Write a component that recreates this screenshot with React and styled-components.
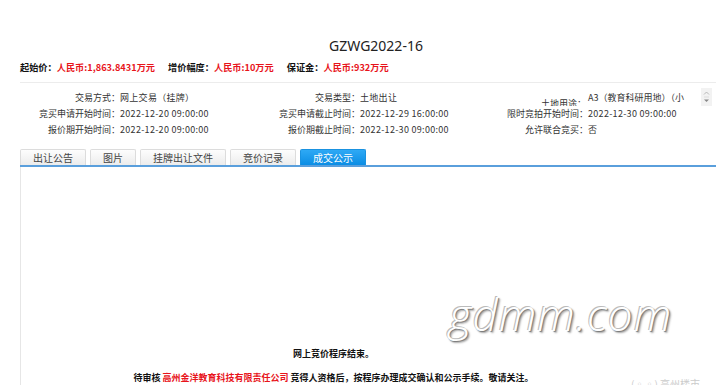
import React from "react";
import styled, { createGlobalStyle } from "styled-components";

const GlobalStyle = createGlobalStyle`
  html, body {
    margin: 0;
    padding: 0;
    background: #fff;
    overflow: hidden;
  }
  body {
    font-family: "Noto Sans CJK SC", "Noto Sans", sans-serif;
    color: #333;
  }
`;

const cjk = `"Noto Sans CJK SC", "Noto Sans", sans-serif`;

const info = [
  [
    ["交易方式：", "网上交易（挂牌）"],
    ["交易类型：", "土地出让"],
    ["土地用途：", "A3（教育科研用地）（小", true],
  ],
  [
    ["竞买申请开始时间：", "2022-12-20 09:00:00"],
    ["竞买申请截止时间：", "2022-12-29 16:00:00"],
    ["限时竞拍开始时间：", "2022-12-30 09:00:00"],
  ],
  [
    ["报价期开始时间：", "2022-12-20 09:00:00"],
    ["报价期截止时间：", "2022-12-30 09:00:00"],
    ["允许联合竞买：", "否"],
  ],
];

const tabs = ["出让公告", "图片", "挂牌出让文件", "竞价记录", "成交公示"];

const App = () => {
  return (
    <Page>
      <GlobalStyle />
      <Title>GZWG2022-16</Title>
      <PriceLine>
        <Price>
          起始价：<Red>人民币:1,863.8431万元</Red>
        </Price>
        <Price>
          增价幅度：<Red>人民币:10万元</Red>
        </Price>
        <Price>
          保证金：<Red>人民币:932万元</Red>
        </Price>
      </PriceLine>
      <Divider />
      <InfoGrid>
        {info.map((row) =>
          row.map(([label, value, scroll]) => (
            <React.Fragment key={label}>
              {scroll ? (
                <ClippedLabel>
                  <span>{label}</span>
                </ClippedLabel>
              ) : (
                <Label>{label}</Label>
              )}
              {scroll ? (
                <ScrollValue>
                  <span>{value}</span>
                  <Spinner>
                    <svg width="7" height="14" viewBox="0 0 7 14">
                      <path d="M1 4.5 L3.5 2 L6 4.5" fill="none" stroke="#aaa" strokeWidth="0.8" />
                      <line x1="1" y1="7" x2="6" y2="7" stroke="#ccc" strokeWidth="0.6" />
                      <path d="M1 9.5 L3.5 12 L6 9.5" fill="#888" />
                    </svg>
                  </Spinner>
                </ScrollValue>
              ) : (
                <Value>{value}</Value>
              )}
            </React.Fragment>
          ))
        )}
      </InfoGrid>
      <TabBar>
        {tabs.map((t, i) => (
          <Tab key={t} $active={i === tabs.length - 1}>
            {t}
          </Tab>
        ))}
      </TabBar>
      <Content>
        <Watermark>gdmm.com</Watermark>
        <Ended>网上竞价程序结束。</Ended>
        <Notice>
          待审核 <Red>高州金洋教育科技有限责任公司</Red> 竞得人资格后，按程序办理成交确认和公示手续。敬请关注。
        </Notice>
        <Stamp>(◦◦) 高州楼市</Stamp>
      </Content>
    </Page>
  );
};

export default App;

const Page = styled.div`
  width: 716px;
  height: 385px;
  padding-left: 20px;
  box-sizing: border-box;
  display: flex;
  flex-direction: column;
`;

const Title = styled.h1`
  margin: 0;
  padding: 37px 0 0 16px;
  text-align: center;
  font-family: "Noto Sans", "Open Sans", sans-serif;
  font-weight: 400;
  font-size: 14px;
  line-height: 18px;
  color: #222;
`;

const PriceLine = styled.div`
  display: flex;
  gap: 13px;
  margin-top: 5px;
  font-family: ${cjk};
  font-size: 9.2px;
  line-height: 14px;
  font-weight: 700;
  color: #111;
`;

const Price = styled.span`
  white-space: nowrap;
`;

const Red = styled.span`
  color: #e8141b;
`;

const Divider = styled.div`
  margin-top: 8px;
  height: 1px;
  background: #ececec;
`;

const InfoGrid = styled.div`
  display: grid;
  grid-template-columns: 100px 140px 100px 128px 100px 1fr;
  grid-auto-rows: 16px;
  margin-top: 7px;
  font-family: ${cjk};
  font-size: 9px;
  color: #333;
`;

const Label = styled.div`
  text-align: right;
  white-space: nowrap;
  line-height: 16px;
`;

const ClippedLabel = styled.div`
  height: 16px;
  overflow: hidden;
  text-align: right;
  white-space: nowrap;
  line-height: 16px;
  padding-top: 6px;
  box-sizing: border-box;
  padding-right: 2px;
`;

const Value = styled.div`
  white-space: nowrap;
  line-height: 16px;
  letter-spacing: 0.3px;
`;

const ScrollValue = styled.div`
  display: flex;
  justify-content: space-between;
  align-items: flex-start;
  white-space: nowrap;
  line-height: 16px;
  padding-right: 4px;
`;

const Spinner = styled.div`
  width: 11px;
  height: 18px;
  margin-top: -2px;
  background: #f2f2f2;
  display: flex;
  align-items: center;
  justify-content: center;
`;

const TabBar = styled.div`
  display: flex;
  gap: 4px;
  margin-top: 11px;
  border-bottom: 2px solid #5a9fdc;
  font-family: ${cjk};
  font-size: 10px;
`;

const Tab = styled.div`
  height: 15px;
  line-height: 15px;
  padding: 0 12px;
  border: 1px solid ${(p) => (p.$active ? "#1a92e0" : "#dcdcdc")};
  border-bottom: none;
  border-radius: 2px 2px 0 0;
  background: ${(p) =>
    p.$active
      ? "linear-gradient(#2ea9f5, #0b8de4)"
      : "linear-gradient(#fdfdfd, #ececec)"};
  color: ${(p) => (p.$active ? "#fff" : "#444")};
  white-space: nowrap;
`;

const Content = styled.div`
  position: relative;
  flex: 1;
  border-left: 1px solid #e6e6e6;
  display: flex;
  flex-direction: column;
  align-items: center;
  justify-content: flex-end;
  padding-right: 70px;
  font-family: ${cjk};
  font-size: 9px;
  font-weight: 700;
  color: #111;
`;

const Ended = styled.div`
  line-height: 14px;
  margin-bottom: 10px;
`;

const Notice = styled.div`
  line-height: 14px;
  white-space: nowrap;
`;

const Watermark = styled.div`
  position: absolute;
  left: 428px;
  top: 117px;
  font-family: "Open Sans", "Noto Sans", sans-serif;
  font-style: italic;
  font-weight: 300;
  font-size: 44px;
  letter-spacing: 1px;
  color: #fff;
  text-shadow: -1px -1px 0 #bbb, 1px 1px 1px #777, 2px 2px 2px #aaa;
`;

const Stamp = styled.div`
  position: absolute;
  left: 610px;
  bottom: -6px;
  font-size: 10px;
  font-weight: 400;
  color: #ccc;
  white-space: nowrap;
`;
